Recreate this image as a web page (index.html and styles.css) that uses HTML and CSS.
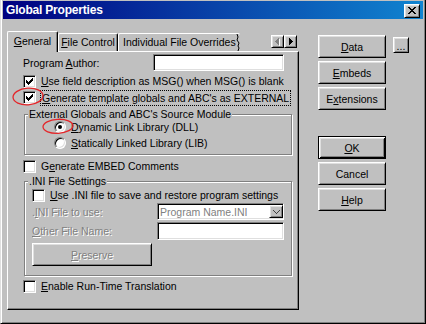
FILE: index.html
```html
<!DOCTYPE html>
<html lang="en">

<head>
    <meta charset="UTF-8">
    <title>Global Properties</title>
    <link rel="stylesheet" href="styles.css">
</head>

<body>
<div class="window">
    <div class="titlebar">
        <span class="title">Global Properties</span>
        <button class="close raised">
            <svg width="8" height="7" viewBox="0 0 8 7" shape-rendering="crispEdges">
                <path d="M0 0h2v1h-2z M6 0h2v1h-2z M1 1h2v1h-2z M5 1h2v1h-2z M2 2h4v1h-4z M3 3h2v1h-2z M2 4h4v1h-4z M1 5h2v1h-2z M5 5h2v1h-2z M0 6h2v1h-2z M6 6h2v1h-2z"/>
            </svg>
        </button>
    </div>

    <div class="client">
        <div class="tabs-area">
            <div class="tab-strip">
                <div class="tab active"><u>G</u>eneral</div>
                <div class="tab tab-file"><u>F</u>ile Control</div>
                <div class="tab clipped">
                    <span>Individual File Overrides</span>
                    <svg class="jag" width="4" height="17" viewBox="0 0 4 17">
                        <polyline points="1,0 2,3 1,6 3,9 2,12 3,14 2,17" fill="none" stroke="#000"/>
                    </svg>
                </div>
                <div class="arrows">
                    <button class="arrow raised">
                        <svg width="5" height="8" viewBox="0 0 5 8" shape-rendering="crispEdges">
                            <path fill="#fff" d="M4 1h1v7h-1z M3 6h1v1h-1z M2 5h1v1h-1z"/>
                            <path fill="#808080" d="M3 0h1v7h-1z M2 1h1v5h-1z M1 2h1v3h-1z M0 3h1v1h-1z"/>
                        </svg>
                    </button>
                    <button class="arrow raised">
                        <svg width="4" height="7" viewBox="0 0 4 7" shape-rendering="crispEdges">
                            <path d="M0 0h1v7h-1z M1 1h1v5h-1z M2 2h1v3h-1z M3 3h1v1h-1z"/>
                        </svg>
                    </button>
                </div>
            </div>

            <div class="panel">
                <div class="row-author">
                    <span class="label">Program <u>A</u>uthor:</span>
                    <div class="field author-field"></div>
                </div>

                <div class="check cb-first">
                    <span class="box"><svg class="tick" width="11" height="11" viewBox="0 0 11 11" shape-rendering="crispEdges"><path d="M8 2h1v1h-1z M7 3h2v1h-2z M2 4h1v1h-1z M6 4h3v1h-3z M2 5h2v1h-2z M5 5h3v1h-3z M2 6h5v1h-5z M3 7h3v1h-3z M4 8h1v1h-1z"/></svg></span>
                    <span><u>U</u>se field description as MSG() when MSG() is blank</span>
                </div>
                <div class="check cb-second">
                    <span class="box"><svg class="tick" width="11" height="11" viewBox="0 0 11 11" shape-rendering="crispEdges"><path d="M8 2h1v1h-1z M7 3h2v1h-2z M2 4h1v1h-1z M6 4h3v1h-3z M2 5h2v1h-2z M5 5h3v1h-3z M2 6h5v1h-5z M3 7h3v1h-3z M4 8h1v1h-1z"/></svg></span>
                    <span class="focus"><u>G</u>enerate template globals and ABC's as EXTERNAL</span>
                </div>

                <div class="group group-source">
                    <span class="group-title">External Globals and ABC's Source Module</span>
                    <div class="radio radio-first">
                        <span class="dot-box"><span class="dot"></span></span>
                        <span><u>D</u>ynamic Link Library (DLL)</span>
                    </div>
                    <div class="radio radio-second">
                        <span class="dot-box"></span>
                        <span><u>S</u>tatically Linked Library (LIB)</span>
                    </div>
                </div>

                <div class="check cb-embed">
                    <span class="box"></span>
                    <span>G<u>e</u>nerate EMBED Comments</span>
                </div>

                <div class="group group-ini">
                    <span class="group-title">.INI File Settings</span>
                    <div class="check cb-ini">
                        <span class="box"></span>
                        <span><u>U</u>se .INI file to save and restore program settings</span>
                    </div>
                    <div class="field-row row-use">
                        <span class="disabled">.<u>I</u>NI File to use:</span>
                        <div class="field combo">
                            <span class="combo-text">Program Name.INI</span>
                            <span class="drop raised">
                                <svg width="7" height="4" viewBox="0 0 7 4" shape-rendering="crispEdges">
                                    <path fill="#404040" d="M0 0h1v1h-1z M6 0h1v1h-1z M1 1h1v1h-1z M5 1h1v1h-1z M2 2h1v1h-1z M4 2h1v1h-1z M3 3h1v1h-1z"/>
                                </svg>
                            </span>
                        </div>
                    </div>
                    <div class="field-row row-other">
                        <span class="disabled"><u>O</u>ther File Name:</span>
                        <div class="field other-field"></div>
                    </div>
                    <button class="btn raised preserve"><span class="disabled"><u>P</u>reserve</span></button>
                </div>

                <div class="check cb-enable">
                    <span class="box"></span>
                    <span><u>E</u>nable Run-Time Translation</span>
                </div>
            </div>
        </div>

        <div class="side">
            <div class="btn-col">
                <button class="btn raised"><u>D</u>ata</button>
                <button class="btn raised gap"><u>E</u>mbeds</button>
                <button class="btn raised gap">E<u>x</u>tensions</button>
                <button class="btn default btn-ok"><u>O</u>K</button>
                <button class="btn raised gap">Cancel</button>
                <button class="btn raised gap"><u>H</u>elp</button>
            </div>
            <button class="more raised">...</button>
        </div>
    </div>

    <svg class="mark mark-check" width="32" height="20" viewBox="0 0 32 20">
        <ellipse cx="16" cy="9.5" rx="15" ry="8.3" transform="rotate(-4 16 9.5)"/>
    </svg>
    <svg class="mark mark-radio" width="32" height="17" viewBox="0 0 32 17">
        <ellipse cx="16" cy="8.3" rx="15" ry="7" transform="rotate(-3 16 8.3)"/>
    </svg>
</div>
</body>

</html>
```

FILE: styles.css
```css
* {
    margin: 0;
    padding: 0;
    box-sizing: border-box;
}

body {
    font-family: "Liberation Sans", Arial, sans-serif;
    font-size: 10.5px;
    color: #000;
    background: #c0c0c0;
}

button {
    font: inherit;
    color: inherit;
}

u {
    text-decoration: underline;
    text-underline-offset: 1px;
}

/* 3d borders */

.raised {
    background: #c0c0c0;
    border: 1px solid;
    border-color: #fff #000 #000 #fff;
    box-shadow: inset 1px 1px #dfdfdf, inset -1px -1px #808080;
}

.field {
    background: #fff;
    border: 1px solid;
    border-color: #808080 #fff #fff #808080;
    box-shadow: inset 1px 1px #000, inset -1px -1px #dfdfdf;
}

.disabled {
    color: #808080;
    text-shadow: 1px 1px #fff;
}

/* window frame */

.window {
    position: relative;
    width: 426px;
    height: 324px;
    background: #c0c0c0;
    border-left: 1px solid #dfdfdf;
    border-right: 1px solid #000;
    border-bottom: 1px solid #000;
    box-shadow: inset 1px 0 #fff, inset -1px -1px #808080;
    padding: 1px 2px 0 2px;
}

.titlebar {
    height: 18px;
    display: flex;
    align-items: center;
    padding: 0 3px;
    background: linear-gradient(to right, #000080, #1084d0);
}

.title {
    flex: 1;
    color: #fff;
    font-weight: bold;
    font-size: 12px;
    letter-spacing: -0.2px;
}

.close {
    width: 16px;
    height: 14px;
    display: flex;
    align-items: center;
    justify-content: center;
    margin-top: 1px;
}

.client {
    display: flex;
}

/* tabs */

.tabs-area {
    width: 292px;
    margin-left: 4px;
}

.tab-strip {
    height: 20px;
    margin-top: 12px;
    display: flex;
    align-items: flex-end;
}

.tab {
    height: 18px;
    line-height: 16px;
    text-align: center;
    white-space: nowrap;
    border: 1px solid;
    border-bottom: 0;
    border-color: #fff #000 #000 #fff;
    box-shadow: inset -1px 0 #808080;
    border-radius: 2px 2px 0 0;
}

.tab.active {
    position: relative;
    z-index: 1;
    width: 51px;
    height: 21px;
    line-height: 18px;
    margin-bottom: -1px;
    background: #c0c0c0;
}

.tab-file {
    width: 60px;
}

.tab.clipped {
    width: 122px;
    display: flex;
    padding-left: 4px;
    border-right: 0;
    box-shadow: none;
}

.jag {
    margin-left: auto;
}

.arrows {
    display: flex;
    align-self: flex-start;
    margin: 4px 2px 0 auto;
}

.arrow {
    width: 13px;
    height: 13px;
    display: flex;
    align-items: center;
    justify-content: center;
}

.panel {
    height: 259px;
    display: flex;
    flex-direction: column;
    align-items: flex-start;
    padding: 2px 0 0 15px;
    border: 1px solid;
    border-color: #fff #000 #000 #fff;
    box-shadow: inset -1px -1px #808080;
}

.row-author {
    width: 261px;
    height: 17px;
    display: flex;
    align-items: center;
    justify-content: space-between;
}

.author-field {
    width: 131px;
    height: 17px;
}

/* checkboxes and radios */

.check {
    height: 13px;
    line-height: 13px;
    display: flex;
    align-items: center;
    gap: 5px;
    white-space: nowrap;
}

.box {
    width: 13px;
    height: 13px;
    flex: none;
    background: #fff;
    border: 1px solid;
    border-color: #808080 #fff #fff #808080;
    box-shadow: inset 1px 1px #000, inset -1px -1px #dfdfdf;
}

.tick {
    display: block;
}

.cb-first {
    margin-top: 4px;
}

.cb-second {
    margin-top: 3px;
}

.focus {
    line-height: 14px;
    padding: 0 1px;
    margin-left: -1px;
    border: 1px dotted #000;
}

.cb-embed {
    margin-top: 5px;
}

.cb-enable {
    margin-top: 4px;
}

.radio {
    height: 12px;
    line-height: 12px;
    margin-left: 29px;
    display: flex;
    align-items: center;
    gap: 5px;
    white-space: nowrap;
}

.radio-second {
    margin-top: 4px;
}

.dot-box {
    width: 12px;
    height: 12px;
    flex: none;
    display: flex;
    align-items: center;
    justify-content: center;
    border-radius: 50%;
    background: #fff;
    border: 1px solid;
    border-color: #808080 #fff #fff #808080;
    box-shadow: inset 1px 1px #000, inset -1px -1px #dfdfdf;
}

.dot {
    width: 4px;
    height: 4px;
    border-radius: 50%;
    background: #000;
}

/* group boxes */

.group {
    width: 268px;
    margin-left: 1px;
    display: flex;
    flex-direction: column;
    align-items: flex-start;
    border: 1px solid #808080;
    box-shadow: inset 1px 1px #fff, 1px 1px #fff;
}

.group-title {
    margin: -7px 0 0 3px;
    padding: 0 1px;
    line-height: 13px;
    background: #c0c0c0;
    white-space: nowrap;
}

.group-source {
    margin-top: 10px;
    padding-bottom: 5px;
}

.group-ini {
    margin-top: 8px;
    padding-bottom: 9px;
}

.cb-ini {
    margin: 1px 0 0 7px;
}

.field-row {
    width: 252px;
    margin-left: 7px;
    display: flex;
    align-items: center;
    justify-content: space-between;
}

.row-use {
    height: 17px;
    margin-top: 1px;
}

.row-other {
    height: 18px;
    margin-top: 2px;
}

.combo {
    width: 127px;
    height: 17px;
    display: flex;
    align-items: stretch;
    padding: 1px 0 1px 2px;
}

.combo-text {
    flex: 1;
    line-height: 15px;
    color: #808080;
}

.drop {
    width: 14px;
    display: flex;
    align-items: center;
    justify-content: center;
}

.other-field {
    width: 127px;
    height: 18px;
}

.preserve {
    width: 120px;
    height: 20px;
    margin: 3px 0 0 7px;
}

/* side buttons */

.side {
    display: flex;
    align-items: flex-start;
    margin-left: 19px;
    padding-top: 16px;
}

.btn-col {
    width: 68px;
    display: flex;
    flex-direction: column;
}

.btn {
    height: 23px;
    text-align: center;
}

.btn.gap {
    margin-top: 3px;
}

.default {
    background: #c0c0c0;
    border: 1px solid #000;
    box-shadow: inset 1px 1px #fff, inset -1px -1px #000, inset 2px 2px #dfdfdf, inset -2px -2px #808080;
}

.btn-ok {
    margin-top: 26px;
}

.more {
    width: 16px;
    height: 16px;
    margin: 2px 0 0 7px;
    line-height: 12px;
    padding-top: 2px;
}

/* red annotation rings */

.mark {
    position: absolute;
    pointer-events: none;
}

.mark ellipse {
    fill: none;
    stroke: #e4262a;
    stroke-width: 1.3;
}

.mark-check {
    left: 11px;
    top: 87px;
}

.mark-radio {
    left: 41px;
    top: 118px;
}
```
